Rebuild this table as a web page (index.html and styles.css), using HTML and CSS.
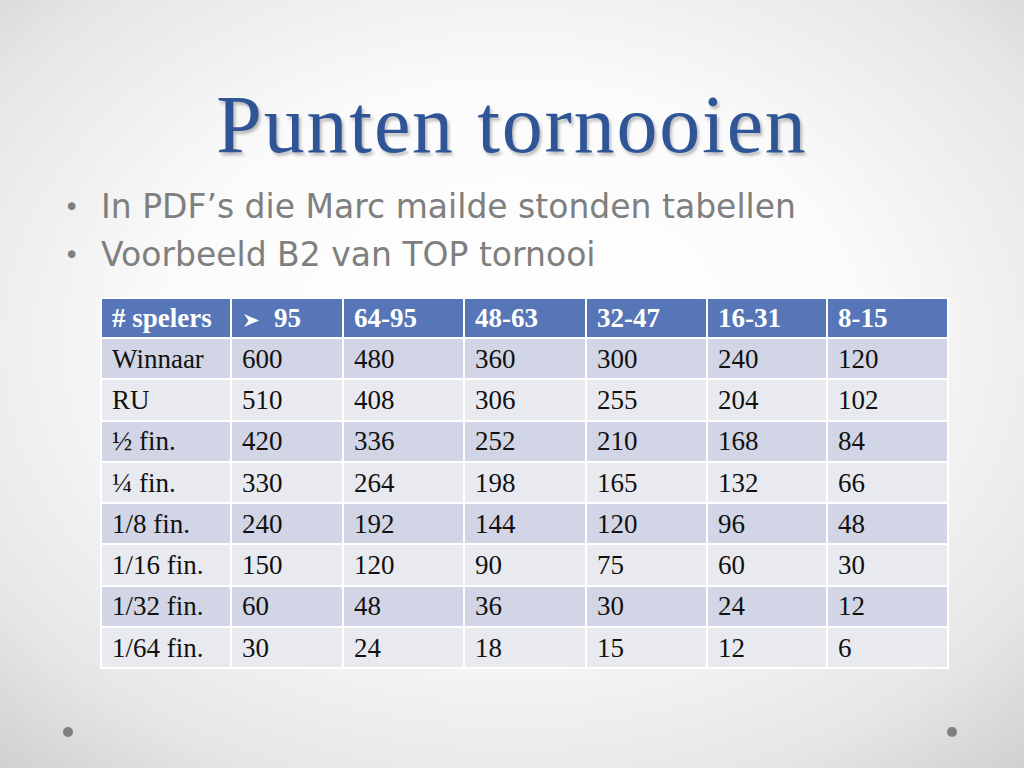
FILE: index.html
```html
<!DOCTYPE html>
<html>
<head>
<meta charset="utf-8">
<link rel="stylesheet" href="styles.css">
</head>
<body>
<div class="slide">
  <h1 class="title">Punten tornooien</h1>
  <ul class="bullets">
    <li>In PDF’s die Marc mailde stonden tabellen</li>
    <li>Voorbeeld B2 van TOP tornooi</li>
  </ul>
  <table class="points">
    <colgroup>
      <col class="c0"><col class="c1"><col class="c2"><col class="c3"><col class="c4"><col class="c5"><col class="c6">
    </colgroup>
    <thead>
      <tr><th># spelers</th><th><svg class="arrow" width="15" height="13" viewBox="0 0 15 13"><polygon points="0,0 15,6.5 0,13 4.5,6.5" fill="#ffffff"/></svg>95</th><th>64-95</th><th>48-63</th><th>32-47</th><th>16-31</th><th>8-15</th></tr>
    </thead>
    <tbody>
      <tr class="odd"><td>Winnaar</td><td>600</td><td>480</td><td>360</td><td>300</td><td>240</td><td>120</td></tr>
      <tr class="even"><td>RU</td><td>510</td><td>408</td><td>306</td><td>255</td><td>204</td><td>102</td></tr>
      <tr class="odd"><td>½ fin.</td><td>420</td><td>336</td><td>252</td><td>210</td><td>168</td><td>84</td></tr>
      <tr class="even"><td>¼ fin.</td><td>330</td><td>264</td><td>198</td><td>165</td><td>132</td><td>66</td></tr>
      <tr class="odd"><td>1/8 fin.</td><td>240</td><td>192</td><td>144</td><td>120</td><td>96</td><td>48</td></tr>
      <tr class="even"><td>1/16 fin.</td><td>150</td><td>120</td><td>90</td><td>75</td><td>60</td><td>30</td></tr>
      <tr class="odd"><td>1/32 fin.</td><td>60</td><td>48</td><td>36</td><td>30</td><td>24</td><td>12</td></tr>
      <tr class="even"><td>1/64 fin.</td><td>30</td><td>24</td><td>18</td><td>15</td><td>12</td><td>6</td></tr>
    </tbody>
  </table>
  <div class="dots">
    <span class="dot"></span>
    <span class="dot"></span>
  </div>
</div>
</body>
</html>
```

FILE: styles.css
```css
html, body {
  margin: 0;
  padding: 0;
}
.slide {
  width: 1024px;
  height: 768px;
  position: relative;
  overflow: hidden;
  box-sizing: border-box;
  padding-top: 80px;
  background: radial-gradient(ellipse 75% 75% at 50% 45%, #ffffff 0%, #fbfbfb 45%, #e6e6e6 80%, #cfcfcf 100%);
}
.title {
  margin: 0;
  text-align: center;
  font-family: "Liberation Serif", "Times New Roman", serif;
  font-weight: normal;
  font-size: 82px;
  letter-spacing: 1.8px;
  line-height: 90px;
  color: #2f5597;
  text-shadow: 2px 3px 3px rgba(0, 0, 0, 0.25);
}
.bullets {
  list-style: none;
  margin: 13px 0 0 0;
  padding: 0 0 0 101px;
  font-family: "DejaVu Sans", "Liberation Sans", sans-serif;
  font-size: 33px;
  line-height: 48px;
  color: #7f7f7f;
}
.bullets li {
  position: relative;
}
.bullets li::before {
  content: "•";
  position: absolute;
  left: -37px;
  color: #7f7f7f;
  font-size: 26px;
}
.points {
  margin: 18px 0 0 100px;
  width: 847px;
  border-collapse: collapse;
  table-layout: fixed;
  font-family: "Liberation Serif", "Times New Roman", serif;
  font-size: 27px;
  color: #111;
}
.c0 { width: 130px; }
.c1 { width: 112px; }
.c2 { width: 121px; }
.c3 { width: 122px; }
.c4 { width: 121px; }
.c5 { width: 120px; }
.c6 { width: 121px; }
.points th, .points td {
  border: 2px solid #ffffff;
  padding: 0 0 0 10px;
  height: 41.3px;
  line-height: 30px;
  text-align: left;
  box-sizing: border-box;
}
.points th {
  background: #5676b8;
  color: #ffffff;
  font-weight: bold;
  height: 40px;
}
.arrow {
  vertical-align: 0px;
  margin: 0 15px 0 2px;
}
.points tr.odd td { background: #d1d5e5; }
.points tr.even td { background: #e9eaf0; }
.dots {
  position: absolute;
  left: 63px;
  right: 67px;
  top: 727px;
  display: flex;
  justify-content: space-between;
}
.dot {
  width: 10px;
  height: 10px;
  border-radius: 50%;
  background: #7f7f7f;
}
```
